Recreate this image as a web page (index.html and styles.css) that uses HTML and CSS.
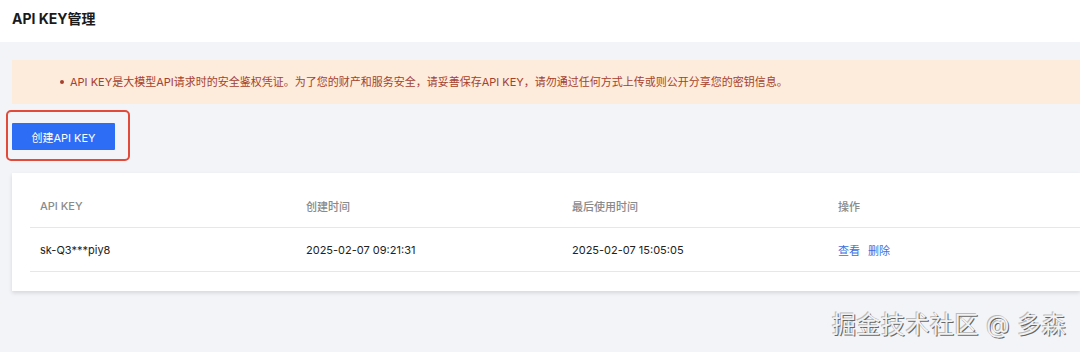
FILE: index.html
```html
<!DOCTYPE html>
<html lang="zh">
<head>
<meta charset="utf-8">
<link rel="stylesheet" href="styles.css">
</head>
<body>
<header class="topbar">
  <h1 class="title">API KEY管理</h1>
</header>
<main class="main">
  <div class="alert">
    <ul class="alert-list">
      <li>API KEY是大模型API请求时的安全鉴权凭证。为了您的财产和服务安全，请妥善保存API KEY，请勿通过任何方式上传或则公开分享您的密钥信息。</li>
    </ul>
  </div>
  <div class="highlight">
    <button class="btn-primary">创建API KEY</button>
  </div>
  <section class="card">
    <table class="table">
      <thead>
        <tr><th class="col">API KEY</th><th class="col">创建时间</th><th class="col">最后使用时间</th><th>操作</th></tr>
      </thead>
      <tbody>
        <tr>
          <td>sk-Q3***piy8</td>
          <td>2025-02-07 09:21:31</td>
          <td>2025-02-07 15:05:05</td>
          <td><a class="link">查看</a><a class="link">删除</a></td>
        </tr>
      </tbody>
    </table>
  </section>
</main>
<div class="watermark">掘金技术社区 @ 多森</div>
</body>
</html>
```
FILE: styles.css
```css
html, body {
  margin: 0;
  padding: 0;
  width: 1080px;
  height: 352px;
  overflow: hidden;
  background: #f3f4f7;
  font-family: "Inter", "Noto Sans CJK SC", sans-serif;
  position: relative;
}
.topbar {
  height: 42px;
  background: #ffffff;
  display: flex;
  align-items: center;
  padding-left: 12px;
}
.title {
  margin: 0;
  font-size: 14px;
  font-weight: 700;
  color: #1a1a1a;
  line-height: 20px;
  margin-top: -4px;
}
.main {
  padding: 18px 0 0 12px;
}
.alert {
  height: 44px;
  background: #fdebdb;
  display: flex;
  align-items: center;
}
.alert-list {
  margin: 0;
  padding-left: 48px;
  color: #a5412d;
  font-size: 11px;
  line-height: 16px;
  list-style: none;
}
.alert-list li {
  display: flex;
  align-items: center;
}
.alert-list li::before {
  content: "";
  width: 4px;
  height: 4px;
  border-radius: 50%;
  background: #a5412d;
  margin-right: 6px;
  flex: none;
}
.highlight {
  width: fit-content;
  margin: 6px 0 0 -6px;
  border: 2px solid #e24a3a;
  border-radius: 5px;
  padding: 11px 13px 9px 4px;
}
.btn-primary {
  display: block;
  width: 103px;
  height: 27px;
  border: none;
  border-radius: 1px;
  background: #2d6df6;
  color: #ffffff;
  font-family: inherit;
  font-size: 11px;
  padding: 0;
}
.card {
  margin-top: 12px;
  background: #ffffff;
  padding: 12px 0 19px 18px;
  box-shadow: 0 2px 4px rgba(0, 0, 0, 0.12);
}
.table {
  border-collapse: collapse;
  table-layout: fixed;
  width: 100%;
  font-size: 11px;
}
.table th, .table td {
  text-align: left;
  padding: 0 10px;
}
.table .col {
  width: 246px;
}
.table th {
  height: 42px;
  font-weight: 500;
  color: #8a8a8a;
  border-bottom: 1px solid #e6e7ea;
}
.table td {
  height: 43px;
  color: #222;
  border-bottom: 1px solid #e6e7ea;
}
.link {
  color: #3c6fe2;
  margin-right: 8px;
}
.watermark {
  position: absolute;
  left: 832px;
  top: 310px;
  font-size: 24px;
  line-height: 30px;
  color: #f2f2f2;
  text-shadow: 1px 1px 0 #666, -1px -1px 0 #bbb;
  white-space: nowrap;
  letter-spacing: 0.5px;
}
```
